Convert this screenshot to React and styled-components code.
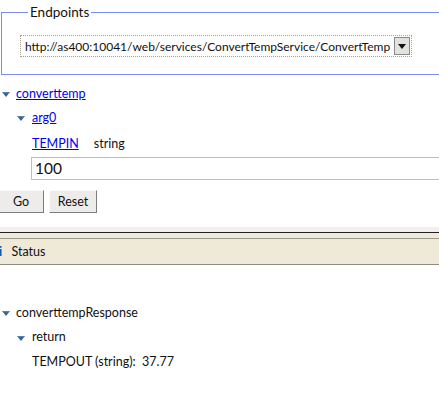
import styled, { createGlobalStyle } from "styled-components";

const Global = createGlobalStyle`
  html, body {
    margin: 0;
    padding: 0;
    background: #fff;
    overflow: hidden;
  }
  body {
    font-family: Lato, "Noto Sans", sans-serif;
    font-size: 12.5px;
    color: #111;
  }
`;

const Page = styled.div`
  width: 439px;
  height: 395px;
  overflow: hidden;
`;

const Fieldset = styled.fieldset`
  margin: 4px -40px 0 1px;
  padding: 15px 0 18px 18px;
  border: 1px solid #7b8cf0;
  border-radius: 0;
  height: 71px;
  box-sizing: border-box;
`;

const Legend = styled.legend`
  padding: 0 2px;
  margin-left: 8px;
  font-size: 13.5px;
  line-height: 16px;
`;

const Select = styled.div`
  display: flex;
  align-items: center;
  width: 392px;
  height: 22px;
  box-sizing: border-box;
  border: 1px dotted #a9a08e;
  padding: 0 1px 0 4px;
  font-size: 12px;
`;

const SelectText = styled.span`
  flex: 1;
  white-space: nowrap;
  overflow: hidden;
`;

const DropButton = styled.span`
  width: 16px;
  height: 18px;
  box-sizing: border-box;
  border: 1px solid #8a8a8a;
  background: #e4e2de;
  display: flex;
  align-items: center;
  justify-content: center;
`;

const Tree = styled.div`
  padding-top: 6px;
`;

const Row = styled.div`
  display: flex;
  align-items: center;
  height: ${p => p.h || 24}px;
  padding-left: ${p => p.indent}px;
`;

const Twisty = styled.svg`
  width: 8px;
  height: 5px;
  margin-right: ${p => p.gap || 6}px;
  margin-top: 3px;
`;

const Link = styled.a`
  color: #0000ee;
  text-decoration: underline;
  cursor: pointer;
`;

const TypeLabel = styled.span`
  margin-left: 15px;
`;

const Input = styled.div`
  margin: 0 -20px 0 31px;
  height: 23px;
  box-sizing: border-box;
  border: 1px solid #c2c0ae;
  padding: 0 3px;
  font-size: 15.5px;
  line-height: 21px;
`;

const Buttons = styled.div`
  display: flex;
  gap: 5px;
  margin: 10px 0 0 -2px;
`;

const Button = styled.button`
  width: ${p => p.w}px;
  height: 23px;
  box-sizing: border-box;
  background: #eeecea;
  border: 1px solid;
  border-color: #fbfbfb #7c7c7c #7c7c7c #fbfbfb;
  font-family: inherit;
  font-size: 12.5px;
  padding: 0;
  color: #111;
`;

const Splitter = styled.div`
  margin-top: 14px;
  height: 5px;
  background: #f6eeee;
  border-bottom: 1px solid #222;
`;

const StatusBar = styled.div`
  display: flex;
  align-items: center;
  height: 26px;
  background: #efead8;
  border-top: 5px solid #efead8;
  box-shadow: inset 0 1px 0 #9a988c;
  border-bottom: 1px solid #8e8c84;
  gap: 9px;
`;

const InfoIcon = styled.span`
  color: #1357b4;
  font-weight: bold;
  font-family: "DejaVu Sans", sans-serif;
  font-size: 13px;
  margin-left: -2px;
`;

const Response = styled.div`
  padding-top: 35px;
`;

const Arrow = ({ gap }) => (
  <Twisty viewBox="0 0 8 5" gap={gap}>
    <path d="M0 0 H8 L4 5 Z" fill="#3a6690" />
    <path d="M1 0 H7" stroke="#7aa0c6" strokeWidth="1" />
  </Twisty>
);

export default function App() {
  return (
    <Page>
      <Global />
      <Fieldset>
        <Legend>Endpoints</Legend>
        <Select>
          <SelectText>http://as400:10041/web/services/ConvertTempService/ConvertTemp</SelectText>
          <DropButton>
            <svg width="8" height="5" viewBox="0 0 8 5">
              <path d="M0 0 H8 L4 5 Z" fill="#111" />
            </svg>
          </DropButton>
        </Select>
      </Fieldset>

      <Tree>
        <Row indent={2}>
          <Arrow />
          <Link>converttemp</Link>
        </Row>
        <Row indent={17}>
          <Arrow gap={7} />
          <Link>arg0</Link>
        </Row>
        <Row indent={32} h={28}>
          <Link>TEMPIN</Link>
          <TypeLabel>string</TypeLabel>
        </Row>
        <Input>100</Input>
        <Buttons>
          <Button w={46}>Go</Button>
          <Button w={48}>Reset</Button>
        </Buttons>
      </Tree>

      <Splitter />
      <StatusBar>
        <InfoIcon>i</InfoIcon>
        <span>Status</span>
      </StatusBar>

      <Response>
        <Row indent={2}>
          <Arrow />
          <span>converttempResponse</span>
        </Row>
        <Row indent={17} h={25}>
          <Arrow gap={7} />
          <span>return</span>
        </Row>
        <Row indent={32}>TEMPOUT (string):&nbsp; 37.77</Row>
      </Response>
    </Page>
  );
}
